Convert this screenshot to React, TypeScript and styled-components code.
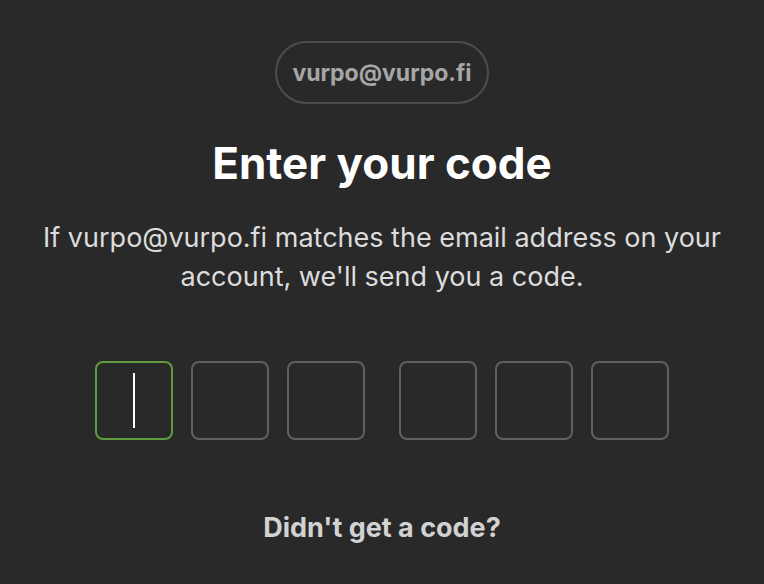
import React from 'react';
import styled, { createGlobalStyle } from 'styled-components';

const GlobalStyle = createGlobalStyle`
  html, body {
    margin: 0;
    padding: 0;
    background-color: #292929;
  }
  body {
    font-family: Inter, "Noto Sans", sans-serif;
  }
`;

const Page = styled.main`
  display: flex;
  flex-direction: column;
  align-items: center;
  width: 764px;
  height: 584px;
  padding-top: 41px;
  box-sizing: border-box;
  background-color: #292929;
`;

const EmailPill = styled.div`
  display: flex;
  align-items: center;
  height: 63px;
  padding: 0 15px;
  box-sizing: border-box;
  border: 2px solid #4d4d4d;
  border-radius: 32px;
  color: #a6a6a6;
  font: 700 23px Inter, sans-serif;
`;

const Title = styled.h1`
  margin: 32px 0 0;
  color: #fff;
  font: 700 44px/54px Inter, sans-serif;
`;

const Description = styled.p`
  margin: 28px 0 0;
  width: 720px;
  text-align: center;
  color: #dcdcdc;
  font: 400 27px/39px Inter, sans-serif;
`;

const CodeRow = styled.div`
  display: flex;
  gap: 34px;
  margin-top: 65px;
`;

const CodeGroup = styled.div`
  display: flex;
  gap: 18px;
`;

const CodeBox = styled.div<{ active?: boolean }>`
  display: flex;
  align-items: center;
  justify-content: center;
  width: 78px;
  height: 79px;
  box-sizing: border-box;
  border: 2px solid ${props => (props.active ? '#5f9b3f' : '#606060')};
  border-radius: 8px;
`;

const Caret = styled.span`
  width: 2px;
  height: 55px;
  background-color: #fff;
`;

const ResendLink = styled.a`
  margin-top: 71px;
  color: #d2d2d2;
  font: 700 27px/34px Inter, sans-serif;
  text-decoration: none;
  cursor: pointer;
`;

const App: React.FC = () => {
  return (
    <>
      <GlobalStyle />
      <Page>
        <EmailPill>vurpo@vurpo.fi</EmailPill>
        <Title>Enter your code</Title>
        <Description>
          If vurpo@vurpo.fi matches the email address on your account, we'll send you a code.
        </Description>
        <CodeRow>
          <CodeGroup>
            <CodeBox active>
              <Caret />
            </CodeBox>
            <CodeBox />
            <CodeBox />
          </CodeGroup>
          <CodeGroup>
            <CodeBox />
            <CodeBox />
            <CodeBox />
          </CodeGroup>
        </CodeRow>
        <ResendLink>Didn't get a code?</ResendLink>
      </Page>
    </>
  );
};

export default App;
